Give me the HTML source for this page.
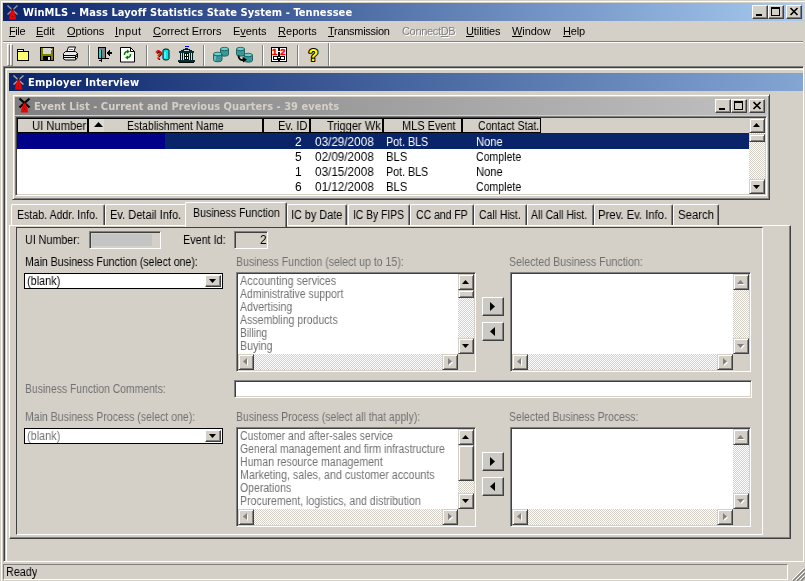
<!DOCTYPE html>
<html><head><meta charset="utf-8"><title>WinMLS - Mass Layoff Statistics State System - Tennessee</title>
<style>
*{box-sizing:border-box;margin:0;padding:0}
html,body{width:805px;height:581px;overflow:hidden;background:#d4d0c8}
body{position:relative;font-family:"Liberation Sans",sans-serif;font-size:11px;color:#000}
.a{position:absolute}
.t{position:absolute;white-space:nowrap;line-height:13px;height:13px;will-change:transform}
.g{color:#727272}
.B{font-size:12px;transform-origin:0 0}
.tt{font-family:"DejaVu Sans Condensed","Liberation Sans",sans-serif;font-weight:bold;color:#fff}
.win{border:1px solid;border-color:#d4d0c8 #404040 #404040 #d4d0c8;box-shadow:inset 1px 1px 0 #fff,inset -1px -1px 0 #808080}
.sunk{border:1px solid;border-color:#808080 #fff #fff #808080;box-shadow:inset 1px 1px 0 #404040,inset -1px -1px 0 #d4d0c8}
.btn{background:#d4d0c8;border:1px solid;border-color:#fff #404040 #404040 #fff;box-shadow:inset -1px -1px 0 #808080}
.sb{background:#d4d0c8;border:1px solid;border-color:#d4d0c8 #404040 #404040 #d4d0c8;box-shadow:inset 1px 1px 0 #fff,inset -1px -1px 0 #808080}
.hat{background-color:#fff;background-image:conic-gradient(#d4d0c8 25%,#fff 0 50%,#d4d0c8 0 75%,#fff 0);background-size:2px 2px}
.hd{background:#d4d0c8;border:1px solid #000}
.tab{background:#d4d0c8;border:1px solid;border-color:#fff #404040 #d4d0c8 #fff;border-bottom:none;box-shadow:inset -1px 0 0 #808080;border-radius:2px 2px 0 0}
svg{position:absolute;overflow:visible}
</style></head><body>
<div class="a" style="left:0px;top:0px;width:805px;height:581px;border-left:1px solid #d4d0c8;border-top:1px solid #d4d0c8;box-shadow:inset 1px 1px 0 #fff"></div>
<div class="a" style="left:3px;top:3px;width:800px;height:18px;background:linear-gradient(90deg,#0a246a,#a6caf0)"></div>
<svg style="left:5px;top:4px" width="16" height="16" viewBox="0 0 16 16"><path d="M2.5 1.5l10 9M12.5 1.5l-10 9" stroke="#9a9a9a" stroke-width="1.4" fill="none"/><path d="M7.5 4.5v3" stroke="#400000" stroke-width="2"/><path d="M4 15.500c0-3 1-6 2.200-8.500h2.600c1.200 2.500 2.200 5.500 2.200 8.500z" fill="#f00000"/><path d="M6 7l1.500-1.500L9 7z" fill="#c00000"/><rect x="7" y="11" width="1" height="2" fill="#800000"/></svg>
<span id="t1" class="t tt" style="left:23.2px;top:6px;letter-spacing:0.077px;">WinMLS - Mass Layoff Statistics State System - Tennessee</span>
<div class="a btn" style="left:752px;top:5px;width:16px;height:14px;"><div class="a" style="left:3px;top:8px;width:6px;height:2px;background:#000"></div></div>
<div class="a btn" style="left:768px;top:5px;width:16px;height:14px;"><div class="a" style="left:2px;top:1px;width:9px;height:9px;border:1px solid #000;border-top-width:2px"></div></div>
<div class="a btn" style="left:786px;top:5px;width:16px;height:14px;"><svg style="left:3px;top:2px" width="8" height="7" viewBox="0 0 8 7"><path d="M0.5 0l7 7M7.5 0l-7 7" stroke="#000" stroke-width="1.7"/></svg></div>
<span id="t2" class="t m" style="left:8.5px;top:25px;letter-spacing:-0.409px;"><u>F</u>ile</span>
<span id="t3" class="t m" style="left:36px;top:25px;letter-spacing:-0.142px;"><u>E</u>dit</span>
<span id="t4" class="t m" style="left:66.5px;top:25px;letter-spacing:-0.102px;"><u>O</u>ptions</span>
<span id="t5" class="t m" style="left:115px;top:25px;letter-spacing:0.384px;"><u>I</u>nput</span>
<span id="t6" class="t m" style="left:153px;top:25px;letter-spacing:-0.048px;"><u>C</u>orrect Errors</span>
<span id="t7" class="t m" style="left:233px;top:25px;letter-spacing:-0.042px;">E<u>v</u>ents</span>
<span id="t8" class="t m" style="left:277.8px;top:25px;letter-spacing:0.053px;"><u>R</u>eports</span>
<span id="t9" class="t m" style="left:328.1px;top:25px;letter-spacing:-0.283px;"><u>T</u>ransmission</span>
<span id="t10" class="t m" style="left:401.5px;top:25px;letter-spacing:-0.320px;color:#808080;text-shadow:1px 1px 0 #fff;">Connect<u>D</u>B</span>
<span id="t11" class="t m" style="left:466.3px;top:25px;letter-spacing:-0.108px;"><u>U</u>tilities</span>
<span id="t12" class="t m" style="left:512.2px;top:25px;letter-spacing:-0.088px;"><u>W</u>indow</span>
<span id="t13" class="t m" style="left:562.5px;top:25px;letter-spacing:-0.185px;"><u>H</u>elp</span>
<div class="a" style="left:3px;top:41px;width:800px;height:1px;background:#808080"></div>
<div class="a" style="left:3px;top:42px;width:800px;height:1px;background:#fff"></div>
<div class="a" style="left:3px;top:43px;width:326px;height:24px;border-right:1px solid #808080;border-bottom:1px solid #808080;box-shadow:1px 0 0 #fff"></div>
<div class="a" style="left:7px;top:44px;width:3px;height:22px;border:1px solid;border-color:#fff #808080 #808080 #fff"></div>
<div class="a" style="left:10px;top:44px;width:3px;height:22px;border:1px solid;border-color:#fff #808080 #808080 #fff"></div>
<div class="a" style="left:88px;top:45px;width:2px;height:21px;border-left:1px solid #808080;border-right:1px solid #fff"></div>
<div class="a" style="left:146px;top:45px;width:2px;height:21px;border-left:1px solid #808080;border-right:1px solid #fff"></div>
<div class="a" style="left:203px;top:45px;width:2px;height:21px;border-left:1px solid #808080;border-right:1px solid #fff"></div>
<div class="a" style="left:262px;top:45px;width:2px;height:21px;border-left:1px solid #808080;border-right:1px solid #fff"></div>
<div class="a" style="left:297px;top:45px;width:2px;height:21px;border-left:1px solid #808080;border-right:1px solid #fff"></div>
<svg style="left:16px;top:47px" width="16" height="16" viewBox="0 0 16 16" shape-rendering="crispEdges"><path d="M1.500 4.500v-1.500l1-1h4l1 1v1.500z" fill="#fff" stroke="#000"/><rect x="1.500" y="4.500" width="11" height="9" fill="#ffff70" stroke="#000"/></svg>
<svg style="left:39px;top:47px" width="16" height="16" viewBox="0 0 16 16" shape-rendering="crispEdges"><rect x="1.500" y="0.500" width="13" height="13" fill="#808000" stroke="#000"/><rect x="4" y="1" width="8" height="6" fill="#d8d8d0"/><rect x="12" y="2" width="1" height="1" fill="#fff"/><rect x="4" y="9" width="8" height="4" fill="#000"/><rect x="9" y="10" width="2" height="3" fill="#e0e0e0"/></svg>
<svg style="left:62px;top:46px" width="17" height="16" viewBox="0 0 17 16"><path d="M4.500 6.500l2-5.500h7l-2 5.500z" fill="#fff" stroke="#000"/><path d="M1.500 7.500l2-2h10l2 2v4l-2 2.500h-10l-2-1z" fill="#e8e8e8" stroke="#000"/><path d="M1.500 9.500h12l2-2M2 11.500h11.500l2-2.500M13.500 9.500v4" stroke="#000" fill="none"/><path d="M7 3.500h4" stroke="#808080"/></svg>
<svg style="left:97px;top:47px" width="16" height="16" viewBox="0 0 16 16" shape-rendering="crispEdges"><rect x="1.500" y="0.500" width="7" height="11" fill="#808080" stroke="#000"/><path d="M2 2l2.500 1v11l-2.500-2z" fill="#00e8e8"/><path d="M4.500 3v11.500l-2.500-1.500" stroke="#000" fill="none"/><path d="M1 11.500h11" stroke="#000"/><rect x="11" y="5" width="4" height="2" fill="#000"/><path d="M12.500 3l-3 3 3 3z" fill="#000"/></svg>
<svg style="left:120px;top:47px" width="16" height="16" viewBox="0 0 16 16"><path d="M0.500 0.500h10l4 4v10.500h-14z" fill="#fff" stroke="#000"/><path d="M10.500 0.500v4h4" fill="none" stroke="#000"/><path d="M4.500 8a3 3 0 0 1 3-3.500" fill="none" stroke="#008000" stroke-width="1.600"/><path d="M7 2.500l3 2-3 2z" fill="#008000"/><path d="M10.500 7a3 3 0 0 1-3 3.500" fill="none" stroke="#008000" stroke-width="1.600"/><path d="M8 8.500l-3 2 3 2z" fill="#008000"/></svg>
<svg style="left:155px;top:47px" width="16" height="16" viewBox="0 0 16 16"><g transform="scale(0.78,1)"><text x="1.500" y="13" font-family="Liberation Sans, sans-serif" font-weight="bold" font-size="13" fill="#000">?</text><text x="0.300" y="12" font-family="Liberation Sans, sans-serif" font-weight="bold" font-size="13" fill="#f00000">?</text></g><path d="M8 3.500v8a3 1.500 0 0 0 6 0v-8a3 1.500 0 0 0 -6 0z" fill="#00e8e8" stroke="#000"/><path d="M10 5v6" stroke="#b0ffff"/></svg>
<svg style="left:178px;top:46px" width="17" height="17" viewBox="0 0 17 17" shape-rendering="crispEdges"><rect x="7" y="0" width="4" height="1" fill="#0000ff"/><path d="M2 5l6.500-3.500L15 5z" fill="#002828"/><rect x="1" y="5" width="15" height="2" fill="#003838"/><rect x="2" y="7" width="13" height="7" fill="#001818"/><rect x="0" y="14" width="17" height="2" fill="#003030"/><rect x="1" y="16" width="15" height="1" fill="#000"/><path d="M3.500 7v7M5.500 7v7M11.500 7v7M13.500 7v7" stroke="#d0e0e0"/><rect x="7" y="8" width="3" height="5" fill="#fff"/><path d="M8.500 8v5M7 10.500h3" stroke="#000"/><path d="M6 4.500h5" stroke="#c0d0d0"/></svg>
<svg style="left:213px;top:47px" width="16" height="16" viewBox="0 0 16 16"><path d="M7.500 2v5.500a4 1.700 0 0 0 8 0v-5.500z" fill="#389898" stroke="#105050" stroke-width="0.800"/><ellipse cx="11.500" cy="2" rx="4" ry="1.700" fill="#70d0d0" stroke="#105050" stroke-width="0.800"/><path d="M0.500 7v6a4.200 1.800 0 0 0 8.500 0v-6z" fill="#389898" stroke="#105050" stroke-width="0.800"/><ellipse cx="4.750" cy="7" rx="4.200" ry="1.800" fill="#70d0d0" stroke="#105050" stroke-width="0.800"/><path d="M2 9v4.500" stroke="#90e0e0"/></svg>
<svg style="left:236px;top:47px" width="17" height="16" viewBox="0 0 17 16"><path d="M0.500 2v5.500a4 1.700 0 0 0 8 0v-5.500z" fill="#389898" stroke="#105050" stroke-width="0.800"/><ellipse cx="4.500" cy="2" rx="4" ry="1.700" fill="#70d0d0" stroke="#105050" stroke-width="0.800"/><path d="M8 8v5.500a4.200 1.700 0 0 0 8.500 0v-5.500z" fill="#389898" stroke="#105050" stroke-width="0.800"/><ellipse cx="12.250" cy="8" rx="4.200" ry="1.700" fill="#70d0d0" stroke="#105050" stroke-width="0.800"/><path d="M2.500 8.500c0 3 2 5 5 4.500" fill="none" stroke="#000" stroke-width="1.800"/><path d="M6.500 10l4.500 2.500-4 3z" fill="#000"/></svg>
<svg style="left:271px;top:47px" width="16" height="15" viewBox="0 0 16 15" shape-rendering="crispEdges"><rect x="0.500" y="0.500" width="15" height="14" fill="#fff" stroke="#000"/><rect x="7" y="1" width="2" height="13" fill="#000"/><rect x="7" y="4" width="2" height="1" fill="#fff"/><rect x="7" y="10" width="2" height="1" fill="#fff"/><path d="M2 9.500h5M9 9.500h5M2 12.500h5M9 12.500h5M2.500 9v4M6.500 9v4M9.500 9v4M13.500 9v4" stroke="#000" fill="none"/><text x="1" y="7.500" font-family="Liberation Sans, sans-serif" font-weight="bold" font-size="9.500" fill="#f00000" stroke="#f00000" stroke-width="0.400" shape-rendering="auto">1</text><text x="9.300" y="7.500" font-family="Liberation Sans, sans-serif" font-weight="bold" font-size="9.500" fill="#f00000" stroke="#f00000" stroke-width="0.400" shape-rendering="auto">2</text></svg>
<svg style="left:307px;top:47px" width="16" height="16" viewBox="0 0 16 16"><text x="1.500" y="13.500" font-family="Liberation Sans, sans-serif" font-weight="bold" font-size="16" fill="#ffff00" stroke="#000" stroke-width="2.200" paint-order="stroke" stroke-linejoin="round">?</text></svg>

<div class="a" style="left:3px;top:66px;width:801px;height:496px;border:1px solid;border-color:#808080 #fff #fff #808080;box-shadow:inset 1px 1px 0 #404040"></div>
<div class="a" style="left:5px;top:68px;width:798px;height:493px;border:1px solid;border-color:#d4d0c8 transparent transparent #d4d0c8;box-shadow:inset 1px 1px 0 #fff;border-right:none;border-bottom:none"></div>
<div class="a" style="left:9px;top:73px;width:794px;height:18px;background:linear-gradient(90deg,#0a246a,#a6caf0 128%)"></div>
<svg style="left:11px;top:74px" width="16" height="16" viewBox="0 0 16 16"><path d="M2.5 1.5l10 9M12.5 1.5l-10 9" stroke="#a8a8a8" stroke-width="1.4" fill="none"/><path d="M7.5 4.5v3" stroke="#400000" stroke-width="2"/><path d="M4 15.500c0-3 1-6 2.200-8.500h2.600c1.200 2.500 2.200 5.500 2.200 8.500z" fill="#f00000"/><path d="M6 7l1.500-1.500L9 7z" fill="#c00000"/><rect x="7" y="11" width="1" height="2" fill="#800000"/></svg>
<span id="t14" class="t tt" style="left:28.2px;top:76px;letter-spacing:0.144px;">Employer Interview</span>
<div class="a win" style="left:12px;top:94px;width:758px;height:106px;"></div>
<div class="a" style="left:15px;top:97px;width:752px;height:18px;background:linear-gradient(90deg,#808080,#c0c0c0)"></div>
<svg style="left:17px;top:97px" width="16" height="16" viewBox="0 0 16 16"><path d="M2.5 1.5l10 9M12.5 1.5l-10 9" stroke="#000" stroke-width="2.2" fill="none"/><path d="M7.5 4.5v3" stroke="#400000" stroke-width="2"/><path d="M4 15.500c0-3 1-6 2.200-8.500h2.600c1.200 2.500 2.200 5.500 2.200 8.500z" fill="#f00000"/><path d="M6 7l1.500-1.500L9 7z" fill="#c00000"/><rect x="7" y="11" width="1" height="2" fill="#800000"/></svg>
<span id="t15" class="t tt" style="left:34.2px;top:100px;letter-spacing:0.030px;color:#d4d0c8;">Event List - Current and Previous Quarters - 39 events</span>
<div class="a btn" style="left:715px;top:99px;width:16px;height:14px;"><div class="a" style="left:3px;top:8px;width:6px;height:2px;background:#000"></div></div>
<div class="a btn" style="left:731px;top:99px;width:16px;height:14px;"><div class="a" style="left:2px;top:1px;width:9px;height:9px;border:1px solid #000;border-top-width:2px"></div></div>
<div class="a btn" style="left:749px;top:99px;width:16px;height:14px;"><svg style="left:3px;top:2px" width="8" height="7" viewBox="0 0 8 7"><path d="M0.5 0l7 7M7.5 0l-7 7" stroke="#000" stroke-width="1.7"/></svg></div>
<div class="a sunk" style="left:15px;top:116px;width:752px;height:80px;background:#fff"></div>
<div class="a" style="left:17px;top:118px;width:732px;height:15px;background:#d4d0c8"></div>
<div class="a hd" style="left:17px;top:118px;width:71px;height:15px;"></div>
<span id="t16" class="t B" style="left:31.7px;top:120px;transform:scaleX(0.9342);">UI Number</span>
<div class="a hd" style="left:88px;top:118px;width:175px;height:15px;"></div>
<span id="t17" class="t B" style="left:126.7px;top:120px;transform:scaleX(0.8734);">Establishment Name</span>
<div class="a hd" style="left:263px;top:118px;width:47px;height:15px;"></div>
<span id="t18" class="t B" style="left:278.4px;top:120px;transform:scaleX(0.9282);">Ev. ID</span>
<div class="a hd" style="left:310px;top:118px;width:73px;height:15px;"></div>
<span id="t19" class="t B" style="left:326.7px;top:120px;transform:scaleX(0.9221);">Trigger Wk</span>
<div class="a hd" style="left:383px;top:118px;width:79px;height:15px;"></div>
<span id="t20" class="t B" style="left:402.2px;top:120px;transform:scaleX(0.9148);">MLS Event</span>
<div class="a hd" style="left:462px;top:118px;width:79px;height:15px;"></div>
<span id="t21" class="t B" style="left:477.7px;top:120px;transform:scaleX(0.8822);">Contact Stat.</span>
<div class="a" style="left:89px;top:119px;width:15px;height:13px;background:#dddbd5"></div>
<svg style="left:0;top:0" width="1" height="1"><polygon points="98.5,122 103,127 94,127" fill="#000"/></svg>
<div class="a" style="left:17px;top:133px;width:732px;height:16px;background:#0a246a"></div>
<div class="a" style="left:17px;top:133px;width:148px;height:16px;background:#000088"></div>
<span id="t22" class="t B" style="left:295.2px;top:136px;transform:scaleX(0.93);color:#fff;">2</span>
<span id="t23" class="t B" style="left:314.5px;top:136px;transform:scaleX(0.9773);color:#fff;">03/29/2008</span>
<span id="t24" class="t B" style="left:385.7px;top:136px;transform:scaleX(0.8908);color:#fff;">Pot. BLS</span>
<span id="t25" class="t B" style="left:475.7px;top:136px;transform:scaleX(0.9307);color:#fff;">None</span>
<span id="t26" class="t B" style="left:295.2px;top:151px;transform:scaleX(0.93);">5</span>
<span id="t27" class="t B" style="left:314.5px;top:151px;transform:scaleX(0.9773);">02/09/2008</span>
<span id="t28" class="t B" style="left:385.7px;top:151px;transform:scaleX(0.9344);">BLS</span>
<span id="t29" class="t B" style="left:475.7px;top:151px;transform:scaleX(0.8801);">Complete</span>
<span id="t30" class="t B" style="left:295.2px;top:166px;transform:scaleX(0.93);">1</span>
<span id="t31" class="t B" style="left:314.5px;top:166px;transform:scaleX(0.9773);">03/15/2008</span>
<span id="t32" class="t B" style="left:385.7px;top:166px;transform:scaleX(0.8908);">Pot. BLS</span>
<span id="t33" class="t B" style="left:475.7px;top:166px;transform:scaleX(0.9307);">None</span>
<span id="t34" class="t B" style="left:295.2px;top:181px;transform:scaleX(0.93);">6</span>
<span id="t35" class="t B" style="left:314.5px;top:181px;transform:scaleX(0.9773);">01/12/2008</span>
<span id="t36" class="t B" style="left:385.7px;top:181px;transform:scaleX(0.9344);">BLS</span>
<span id="t37" class="t B" style="left:475.7px;top:181px;transform:scaleX(0.8801);">Complete</span>
<div class="a hat" style="left:749px;top:118px;width:16px;height:76px;"></div>
<div class="a sb" style="left:749px;top:118px;width:16px;height:15px;"></div>
<svg style="left:0;top:0" width="1" height="1"><polygon points="756.5,123 760,127 753,127" fill="#000"/></svg>
<div class="a sb" style="left:749px;top:134px;width:16px;height:8px;"></div>
<div class="a sb" style="left:749px;top:179px;width:16px;height:15px;"></div>
<svg style="left:0;top:0" width="1" height="1"><polygon points="753,185 760,185 756.5,189" fill="#000"/></svg>
<div class="a" style="left:9px;top:225px;width:782px;height:314px;border:1px solid;border-color:#fff #404040 #404040 #fff;box-shadow:inset -1px -1px 0 #808080"></div>
<div class="a tab" style="left:11px;top:204px;width:94px;height:21px;"></div>
<span id="t38" class="t B" style="left:16.8px;top:209px;transform:scaleX(0.8851);">Estab. Addr. Info.</span>
<div class="a tab" style="left:105px;top:204px;width:82px;height:21px;"></div>
<span id="t39" class="t B" style="left:110.2px;top:209px;transform:scaleX(0.9228);">Ev. Detail Info.</span>
<div class="a tab" style="left:287px;top:204px;width:60px;height:21px;"></div>
<span id="t40" class="t B" style="left:290.6px;top:209px;transform:scaleX(0.9047);">IC by Date</span>
<div class="a tab" style="left:348px;top:204px;width:62px;height:21px;"></div>
<span id="t41" class="t B" style="left:352.9px;top:209px;transform:scaleX(0.8594);">IC By FIPS</span>
<div class="a tab" style="left:410px;top:204px;width:64px;height:21px;"></div>
<span id="t42" class="t B" style="left:415.7px;top:209px;transform:scaleX(0.8710);">CC and FP</span>
<div class="a tab" style="left:474px;top:204px;width:53px;height:21px;"></div>
<span id="t43" class="t B" style="left:478.7px;top:209px;transform:scaleX(0.8685);">Call Hist.</span>
<div class="a tab" style="left:527px;top:204px;width:67px;height:21px;"></div>
<span id="t44" class="t B" style="left:531.2px;top:209px;transform:scaleX(0.8688);">All Call Hist.</span>
<div class="a tab" style="left:594px;top:204px;width:79px;height:21px;"></div>
<span id="t45" class="t B" style="left:598.2px;top:209px;transform:scaleX(0.9403);">Prev. Ev. Info.</span>
<div class="a tab" style="left:673px;top:204px;width:46px;height:21px;"></div>
<span id="t46" class="t B" style="left:678px;top:209px;transform:scaleX(0.9492);">Search</span>
<div class="a tab" style="left:185px;top:202px;width:102px;height:25px;"></div>
<span id="t47" class="t B" style="left:192.7px;top:207px;transform:scaleX(0.8841);">Business Function</span>
<div class="a" style="left:16px;top:227px;width:747px;height:308px;border:1px solid;border-color:#404040 #fff #fff #404040"></div>
<span id="t48" class="t B" style="left:24.7px;top:234px;transform:scaleX(0.8915);">UI Number:</span>
<div class="a sunk" style="left:89px;top:231px;width:72px;height:18px;background:#d4d0c8"></div>
<div class="a" style="left:92px;top:234px;width:60px;height:12px;background:#c4c4c4"></div>
<span id="t49" class="t B" style="left:182.9px;top:234px;transform:scaleX(0.9013);">Event Id:</span>
<div class="a sunk" style="left:234px;top:231px;width:34px;height:18px;background:#d4d0c8"></div>
<span id="t50" class="t B" style="left:260.2px;top:234px;transform:scaleX(0.93);">2</span>
<span id="t51" class="t B" style="left:24.7px;top:256px;transform:scaleX(0.8777);">Main Business Function (select one):</span>
<span id="t52" class="t g B" style="left:235.7px;top:256px;transform:scaleX(0.8791);">Business Function (select up to 15):</span>
<span id="t53" class="t g B" style="left:508.7px;top:256px;transform:scaleX(0.8830);">Selected Business Function:</span>
<span id="t54" class="t g B" style="left:24.7px;top:383px;transform:scaleX(0.8646);">Business Function Comments:</span>
<span id="t55" class="t g B" style="left:24.7px;top:411px;transform:scaleX(0.8769);">Main Business Process (select one):</span>
<span id="t56" class="t g B" style="left:235.7px;top:411px;transform:scaleX(0.8685);">Business Process (select all that apply):</span>
<span id="t57" class="t g B" style="left:508.7px;top:411px;transform:scaleX(0.8686);">Selected Business Process:</span>
<div class="a" style="left:24px;top:273px;width:199px;height:16px;background:#fff;border:1px solid #000"></div>
<div class="a btn" style="left:205px;top:275px;width:16px;height:12px;"></div>
<svg style="left:0;top:0" width="1" height="1"><polygon points="209,279 216,279 212.5,283" fill="#000"/></svg>
<span id="t58" class="t B" style="left:26.7px;top:275px;transform:scaleX(0.9049);">(blank)</span>
<div class="a" style="left:24px;top:428px;width:199px;height:16px;background:#fff;border:1px solid #000"></div>
<div class="a btn" style="left:205px;top:430px;width:16px;height:12px;"></div>
<svg style="left:0;top:0" width="1" height="1"><polygon points="209,434 216,434 212.5,438" fill="#000"/></svg>
<span id="t59" class="t g B" style="left:26.7px;top:430px;transform:scaleX(0.9049);">(blank)</span>
<div class="a sunk" style="left:236px;top:272px;width:240px;height:100px;background:#fff"></div>
<div class="a hat" style="left:458px;top:274px;width:16px;height:80px;"></div>
<div class="a hat" style="left:238px;top:354px;width:220px;height:16px;"></div>
<div class="a" style="left:458px;top:354px;width:16px;height:16px;background:#d4d0c8"></div>
<div class="a sb" style="left:458px;top:274px;width:16px;height:16px;"></div>
<svg style="left:0;top:0" width="1" height="1"><polygon points="465.5,280 469,284 462,284" fill="#000"/></svg>
<div class="a sb" style="left:458px;top:338px;width:16px;height:16px;"></div>
<svg style="left:0;top:0" width="1" height="1"><polygon points="462,344 469,344 465.5,348" fill="#000"/></svg>
<div class="a sb" style="left:238px;top:354px;width:16px;height:16px;"></div>
<svg style="left:0;top:0" width="1" height="1"><polygon points="248,359 248,366 244,362.5" fill="#fff"/><polygon points="247,358 247,365 243,361.5" fill="#808080"/></svg>
<div class="a sb" style="left:442px;top:354px;width:16px;height:16px;"></div>
<svg style="left:0;top:0" width="1" height="1"><polygon points="449,359 453,362.5 449,366" fill="#fff"/><polygon points="448,358 452,361.5 448,365" fill="#808080"/></svg>
<div class="a sb" style="left:458px;top:290px;width:16px;height:8px;"></div>
<span id="t60" class="t g B" style="left:240.2px;top:275px;transform:scaleX(0.9014);">Accounting services</span>
<span id="t61" class="t g B" style="left:240.2px;top:288px;transform:scaleX(0.8693);">Administrative support</span>
<span id="t62" class="t g B" style="left:240.2px;top:301px;transform:scaleX(0.8792);">Advertising</span>
<span id="t63" class="t g B" style="left:240.2px;top:314px;transform:scaleX(0.8771);">Assembling products</span>
<span id="t64" class="t g B" style="left:240.2px;top:327px;transform:scaleX(0.8496);">Billing</span>
<span id="t65" class="t g B" style="left:240.2px;top:340px;transform:scaleX(0.8855);">Buying</span>
<div class="a sunk" style="left:510px;top:272px;width:241px;height:100px;background:#fff"></div>
<div class="a hat" style="left:733px;top:274px;width:16px;height:80px;"></div>
<div class="a hat" style="left:512px;top:354px;width:221px;height:16px;"></div>
<div class="a" style="left:733px;top:354px;width:16px;height:16px;background:#d4d0c8"></div>
<div class="a sb" style="left:733px;top:274px;width:16px;height:16px;"></div>
<svg style="left:0;top:0" width="1" height="1"><polygon points="741.5,281 745,285 738,285" fill="#fff"/><polygon points="740.5,280 744,284 737,284" fill="#808080"/></svg>
<div class="a sb" style="left:733px;top:338px;width:16px;height:16px;"></div>
<svg style="left:0;top:0" width="1" height="1"><polygon points="738,345 745,345 741.5,349" fill="#fff"/><polygon points="737,344 744,344 740.5,348" fill="#808080"/></svg>
<div class="a sb" style="left:512px;top:354px;width:16px;height:16px;"></div>
<svg style="left:0;top:0" width="1" height="1"><polygon points="522,359 522,366 518,362.5" fill="#fff"/><polygon points="521,358 521,365 517,361.5" fill="#808080"/></svg>
<div class="a sb" style="left:717px;top:354px;width:16px;height:16px;"></div>
<svg style="left:0;top:0" width="1" height="1"><polygon points="724,359 728,362.5 724,366" fill="#fff"/><polygon points="723,358 727,361.5 723,365" fill="#808080"/></svg>
<div class="a sunk" style="left:236px;top:427px;width:240px;height:100px;background:#fff"></div>
<div class="a hat" style="left:458px;top:429px;width:16px;height:80px;"></div>
<div class="a hat" style="left:238px;top:509px;width:220px;height:16px;"></div>
<div class="a" style="left:458px;top:509px;width:16px;height:16px;background:#d4d0c8"></div>
<div class="a sb" style="left:458px;top:429px;width:16px;height:16px;"></div>
<svg style="left:0;top:0" width="1" height="1"><polygon points="465.5,435 469,439 462,439" fill="#000"/></svg>
<div class="a sb" style="left:458px;top:493px;width:16px;height:16px;"></div>
<svg style="left:0;top:0" width="1" height="1"><polygon points="462,499 469,499 465.5,503" fill="#000"/></svg>
<div class="a sb" style="left:238px;top:509px;width:16px;height:16px;"></div>
<svg style="left:0;top:0" width="1" height="1"><polygon points="248,514 248,521 244,517.5" fill="#fff"/><polygon points="247,513 247,520 243,516.5" fill="#808080"/></svg>
<div class="a sb" style="left:442px;top:509px;width:16px;height:16px;"></div>
<svg style="left:0;top:0" width="1" height="1"><polygon points="449,514 453,517.5 449,521" fill="#fff"/><polygon points="448,513 452,516.5 448,520" fill="#808080"/></svg>
<div class="a sb" style="left:458px;top:445px;width:16px;height:36px;"></div>
<span id="t66" class="t g B" style="left:240.2px;top:430px;transform:scaleX(0.8672);">Customer and after-sales service</span>
<span id="t67" class="t g B" style="left:240.2px;top:443px;transform:scaleX(0.8670);">General management and firm infrastructure</span>
<span id="t68" class="t g B" style="left:240.2px;top:456px;transform:scaleX(0.8804);">Human resource management</span>
<span id="t69" class="t g B" style="left:240.2px;top:469px;transform:scaleX(0.8927);">Marketing, sales, and customer accounts</span>
<span id="t70" class="t g B" style="left:240.2px;top:482px;transform:scaleX(0.8722);">Operations</span>
<span id="t71" class="t g B" style="left:240.2px;top:495px;transform:scaleX(0.8767);">Procurement, logistics, and distribution</span>
<div class="a sunk" style="left:510px;top:427px;width:241px;height:100px;background:#fff"></div>
<div class="a hat" style="left:733px;top:429px;width:16px;height:80px;"></div>
<div class="a hat" style="left:512px;top:509px;width:221px;height:16px;"></div>
<div class="a" style="left:733px;top:509px;width:16px;height:16px;background:#d4d0c8"></div>
<div class="a sb" style="left:733px;top:429px;width:16px;height:16px;"></div>
<svg style="left:0;top:0" width="1" height="1"><polygon points="741.5,436 745,440 738,440" fill="#fff"/><polygon points="740.5,435 744,439 737,439" fill="#808080"/></svg>
<div class="a sb" style="left:733px;top:493px;width:16px;height:16px;"></div>
<svg style="left:0;top:0" width="1" height="1"><polygon points="738,500 745,500 741.5,504" fill="#fff"/><polygon points="737,499 744,499 740.5,503" fill="#808080"/></svg>
<div class="a sb" style="left:512px;top:509px;width:16px;height:16px;"></div>
<svg style="left:0;top:0" width="1" height="1"><polygon points="522,514 522,521 518,517.5" fill="#fff"/><polygon points="521,513 521,520 517,516.5" fill="#808080"/></svg>
<div class="a sb" style="left:717px;top:509px;width:16px;height:16px;"></div>
<svg style="left:0;top:0" width="1" height="1"><polygon points="724,514 728,517.5 724,521" fill="#fff"/><polygon points="723,513 727,516.5 723,520" fill="#808080"/></svg>
<div class="a btn" style="left:482px;top:297px;width:22px;height:19px;background:#cbc9c4;"></div>
<svg style="left:0;top:0" width="1" height="1"><polygon points="490,302 495,306.5 490,311" fill="#000"/></svg>
<div class="a btn" style="left:482px;top:322px;width:22px;height:19px;background:#cbc9c4;"></div>
<svg style="left:0;top:0" width="1" height="1"><polygon points="495,327 495,336 490,331.5" fill="#000"/></svg>
<div class="a btn" style="left:482px;top:452px;width:22px;height:19px;background:#cbc9c4;"></div>
<svg style="left:0;top:0" width="1" height="1"><polygon points="490,457 495,461.5 490,466" fill="#000"/></svg>
<div class="a btn" style="left:482px;top:477px;width:22px;height:19px;background:#cbc9c4;"></div>
<svg style="left:0;top:0" width="1" height="1"><polygon points="495,482 495,491 490,486.5" fill="#000"/></svg>
<div class="a sunk" style="left:234px;top:380px;width:518px;height:18px;background:#fff"></div>
<div class="a" style="left:3px;top:564px;width:785px;height:16px;border:1px solid;border-color:#808080 #fff #fff #808080"></div>
<span id="t72" class="t B" style="left:6.2px;top:566px;transform:scaleX(0.8995);">Ready</span>
<svg style="left:792px;top:568px" width="13" height="13" viewBox="0 0 13 13"><path d="M13 1L1 13M13 5L5 13M13 9L9 13" stroke="#808080" stroke-width="1.5"/><path d="M12 0L0 12M12 4L4 12M12 8L8 12" stroke="#fff" stroke-width="1"/></svg>
</body></html>
